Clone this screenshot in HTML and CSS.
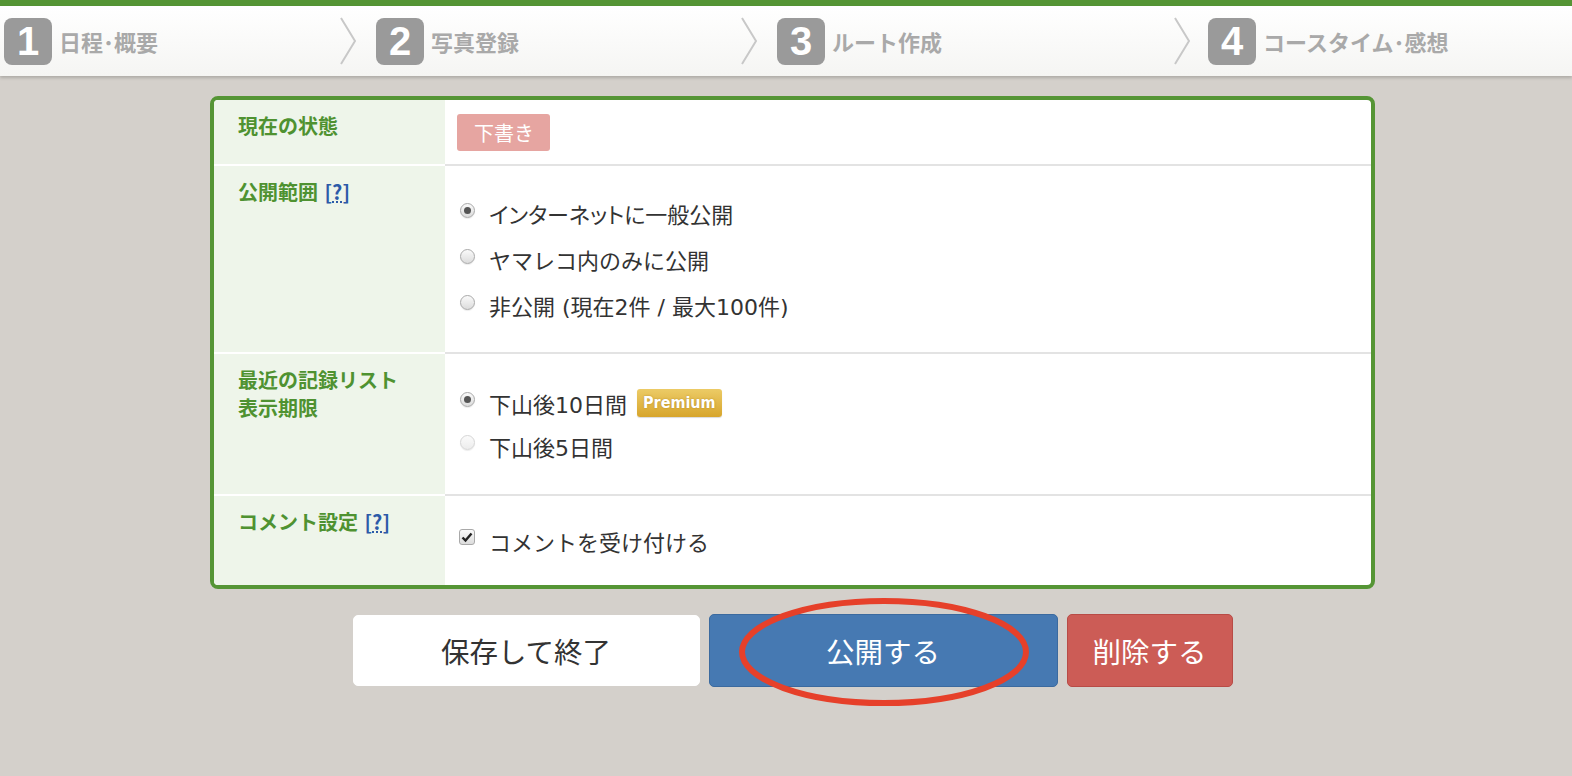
FILE: index.html
```html
<!DOCTYPE html>
<html lang="ja">
<head>
<meta charset="utf-8">
<link rel="stylesheet" href="styles.css">
</head>
<body>
<div class="topbar"></div>
<header class="steps">
  <div class="step"><span class="num">1</span><span class="stxt">日程･概要</span></div>
  <div class="chev"><svg width="16" height="48" viewBox="0 0 16 48"><polyline points="1,1 15,24 1,47" fill="none" stroke="#c8c8c8" stroke-width="2"/></svg></div>
  <div class="step"><span class="num">2</span><span class="stxt">写真登録</span></div>
  <div class="chev"><svg width="16" height="48" viewBox="0 0 16 48"><polyline points="1,1 15,24 1,47" fill="none" stroke="#c8c8c8" stroke-width="2"/></svg></div>
  <div class="step"><span class="num">3</span><span class="stxt">ルート作成</span></div>
  <div class="chev"><svg width="16" height="48" viewBox="0 0 16 48"><polyline points="1,1 15,24 1,47" fill="none" stroke="#c8c8c8" stroke-width="2"/></svg></div>
  <div class="step"><span class="num">4</span><span class="stxt">コースタイム･感想</span></div>
</header>

<main class="wrap">
  <div class="card">
    <div class="row r1">
      <div class="lbl">現在の状態</div>
      <div class="val"><span class="draft">下書き</span></div>
    </div>
    <div class="row r2">
      <div class="lbl">公開範囲 <a class="help">[<u>?</u>]</a></div>
      <div class="val">
        <div class="opt opt-palt"><span class="radio on"></span>インターネットに一般公開</div>
        <div class="opt"><span class="radio"></span>ヤマレコ内のみに公開</div>
        <div class="opt"><span class="radio"></span>非公開 (現在2件 / 最大100件)</div>
      </div>
    </div>
    <div class="row r3">
      <div class="lbl">最近の記録リスト<br>表示期限</div>
      <div class="val">
        <div class="opt opt-s"><span class="radio on"></span>下山後10日間<span class="premium">Premium</span></div>
        <div class="opt opt-s"><span class="radio dis"></span>下山後5日間</div>
      </div>
    </div>
    <div class="row r4">
      <div class="lbl">コメント設定 <a class="help">[<u>?</u>]</a></div>
      <div class="val">
        <div class="opt"><span class="check"><svg width="12" height="12" viewBox="0 0 12 12"><path d="M1.5 6.5 L4.5 9.5 L10.5 2.5" fill="none" stroke="#222" stroke-width="2.4"/></svg></span>コメントを受け付ける</div>
      </div>
    </div>
  </div>

  <div class="buttons">
    <button class="btn save">保存して終了</button>
    <button class="btn publish">公開する<svg class="ring" width="296" height="114" viewBox="0 0 296 114"><ellipse cx="148" cy="57" rx="142" ry="51" fill="none" stroke="#e6402a" stroke-width="6"/></svg></button>
    <button class="btn delete">削除する</button>
  </div>
</main>
</body>
</html>
```

FILE: styles.css
```css
* { box-sizing: border-box; }
html, body { margin: 0; padding: 0; }
body {
  background: #d4d0cb;
  font-family: "Noto Sans CJK JP", "Noto Sans", sans-serif;
  color: #333;
  width: 1572px;
  height: 776px;
  overflow: hidden;
}
.topbar { height: 6px; background: #559535; }
.steps {
  height: 70px;
  background: linear-gradient(#ffffff, #f5f5f3);
  box-shadow: 0 2px 3px rgba(0,0,0,0.18);
  display: grid;
  grid-template-columns: 336px 36px 365px 36px 397px 34px 1fr;
  align-items: center;
  padding-left: 4px;
}
.step { display: flex; align-items: center; }
.num {
  width: 48px; height: 47px;
  background: #9a9a9a;
  border-radius: 8px;
  color: #fff;
  font-family: "Liberation Sans", Arial, sans-serif;
  font-weight: bold;
  font-size: 40px;
  line-height: 47px;
  text-align: center;
}
.stxt {
  margin-left: 7px;
  font-size: 22px;
  font-weight: bold;
  color: #a9a9a9;
}
.chev { display: flex; align-items: center; height: 48px; }
.chev svg { display: block; }

.wrap { padding: 20px 0 0 210px; width: 1375px; }
.card {
  width: 1165px;
  border: 4px solid #559535;
  border-radius: 8px;
  background: #fff;
  overflow: hidden;
}
.row { display: grid; grid-template-columns: 231px 1fr; }
.row + .row .lbl { border-top: 2px solid #fff; }
.row + .row .val { border-top: 2px solid #e3e3e3; }
.lbl {
  background: #eef5ea;
  color: #4f9231;
  font-weight: bold;
  font-size: 20px;
  line-height: 28px;
  padding: 12px 0 0 24px;
}
.help { color: #2c5aa8; font-weight: bold; margin-left: 2px; }
.help u { text-decoration-style: dotted; }
.val {
  display: flex;
  flex-direction: column;
  justify-content: center;
  padding-left: 12px;
  font-family: "DejaVu Sans", "Noto Sans CJK JP", sans-serif;
  font-size: 22px;
  color: #333;
}
.r1 { height: 64px; }
.r2 { height: 188px; }
.r3 { height: 142px; }
.r4 { height: 91px; }

.draft {
  align-self: flex-start;
  background: #e6a5a1;
  color: #fff;
  font-family: "Noto Sans CJK JP", sans-serif;
  font-size: 20px;
  line-height: 37px;
  height: 37px;
  padding: 0 16px 0 17px;
  border-radius: 3px;
}
.opt { display: flex; align-items: center; height: 46px; }
.opt-s { height: 43px; }
.opt-palt { font-feature-settings: "palt"; }
.radio {
  width: 15px; height: 15px;
  border-radius: 50%;
  border: 1px solid #a9a9a9;
  background: linear-gradient(#fafafa, #dcdcdc);
  margin: 0 14px 6px 3px;
  display: flex; align-items: center; justify-content: center;
  box-shadow: 0 1px 1px rgba(0,0,0,0.08);
}
.radio.on::after {
  content: "";
  width: 7px; height: 7px;
  border-radius: 50%;
  background: #555;
}
.radio.dis { border-color: #d6d6d6; background: linear-gradient(#fbfbfb, #ececec); }
.check {
  width: 16px; height: 16px;
  border: 1px solid #a9a9a9;
  border-radius: 3px;
  background: linear-gradient(#fafafa, #dcdcdc);
  margin: 0 14px 8px 2px;
  display: flex; align-items: center; justify-content: center;
}
.premium {
  margin-left: 10px;
  height: 28px;
  padding: 0 6px;
  border-radius: 3px;
  background: linear-gradient(#eccb66, #d7a52c);
  color: #fff;
  font-family: "DejaVu Sans Condensed", "DejaVu Sans", sans-serif;
  font-weight: bold;
  font-size: 16px;
  line-height: 28px;
  text-shadow: 0 0 2px rgba(150,110,20,0.6);
  box-shadow: 0 1px 1px rgba(0,0,0,0.15);
}

.buttons {
  width: 1165px;
  margin-top: 25px;
  display: flex;
  justify-content: center;
  gap: 9px;
}
.btn {
  height: 73px;
  border-radius: 5px;
  font-family: "Noto Sans CJK JP", "Noto Sans", sans-serif;
  font-size: 28.5px;
  border: 1px solid transparent;
  padding: 0;
}
.save { width: 347px; background: #fff; color: #333; border-color: #fff; height: 71px; margin-top: 1px; }
.publish { width: 349px; background: #4679b2; border-color: #3b6a9f; color: #fff; position: relative; }
.delete { width: 166px; background: #cc5c56; border-color: #b84b46; color: #fff; }
.ring { position: absolute; left: 26px; top: -20px; pointer-events: none; }
```
